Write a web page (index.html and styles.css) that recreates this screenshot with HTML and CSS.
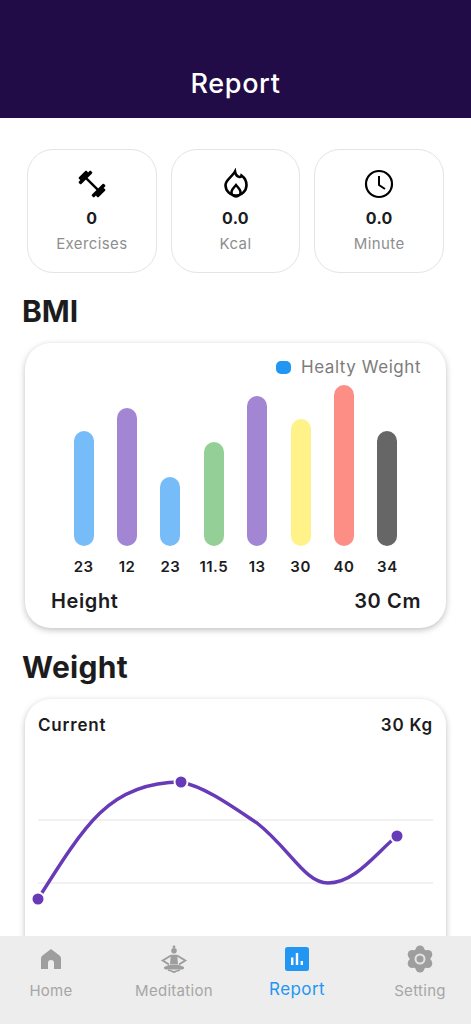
FILE: index.html
```html
<!DOCTYPE html>
<html lang="en">
<head>
  <meta charset="UTF-8">
  <meta name="viewport" content="width=device-width, initial-scale=1.0">
  <title>Report</title>
  <link rel="stylesheet" href="styles.css">
</head>
<body>
  <div class="screen">
    <header class="top-bar">Report</header>

    <main class="content">
      <!-- Summary -->
      <section class="stats">
        <div class="stat">
          <svg class="stat-icon" viewBox="0 0 32 32">
            <g transform="rotate(45 16 16)" fill="#000">
              <rect x="8" y="14.800" width="16" height="2.400"/>
              <rect x="5" y="7.500" width="3.500" height="17" rx="1"/>
              <rect x="23.500" y="7.500" width="3.500" height="17" rx="1"/>
              <rect x="2" y="10.500" width="3.500" height="11" rx="1"/>
              <rect x="26.500" y="10.500" width="3.500" height="11" rx="1"/>
            </g>
          </svg>
          <div class="stat-value">0</div>
          <div class="stat-label">Exercises</div>
        </div>
        <div class="stat">
          <svg class="stat-icon" viewBox="-4 -2 32 32" fill="none" stroke="#000">
            <path stroke-width="2.600" d="M11 1.500c.5 3 2 5 4.500 5.500 1 .2 1.800-.5 2-1.500C21 8 22.500 11.500 22.500 15a10.500 10.500 0 0 1-21 0C1.500 10 8 7 11 1.500z"/>
            <path stroke-width="2.400" d="M12 15c2 2.500 4.500 4.500 4.500 7a4.500 4.500 0 0 1-9 0c0-2.500 2.500-4.500 4.500-7z"/>
          </svg>
          <div class="stat-value">0.0</div>
          <div class="stat-label">Kcal</div>
        </div>
        <div class="stat">
          <svg class="stat-icon" viewBox="0 0 32 32" fill="none" stroke="#000" stroke-width="2.200">
            <circle cx="16" cy="16" r="13"/>
            <path d="M16 8v9l6 4" stroke-width="2"/>
          </svg>
          <div class="stat-value">0.0</div>
          <div class="stat-label">Minute</div>
        </div>
      </section>

      <h2 class="section-title">BMI</h2>
      <section class="card bmi-card">
        <div class="legend"><span class="legend-dot"></span>Healty Weight</div>
        <div class="bars">
          <div class="bar-col"><span class="bar bar-blue" style="height:115px"></span><span class="bar-label">23</span></div>
          <div class="bar-col"><span class="bar bar-purple" style="height:138px"></span><span class="bar-label">12</span></div>
          <div class="bar-col"><span class="bar bar-blue" style="height:69px"></span><span class="bar-label">23</span></div>
          <div class="bar-col"><span class="bar bar-green" style="height:104px"></span><span class="bar-label">11.5</span></div>
          <div class="bar-col"><span class="bar bar-purple" style="height:150px"></span><span class="bar-label">13</span></div>
          <div class="bar-col"><span class="bar bar-yellow" style="height:127px"></span><span class="bar-label">30</span></div>
          <div class="bar-col"><span class="bar bar-red" style="height:161px"></span><span class="bar-label">40</span></div>
          <div class="bar-col"><span class="bar bar-dark" style="height:115px"></span><span class="bar-label">34</span></div>
        </div>
        <div class="card-row"><span>Height</span><span>30 Cm</span></div>
      </section>

      <h2 class="section-title weight-title">Weight</h2>
      <section class="card weight-card">
        <div class="weight-row"><span>Current</span><span>30 Kg</span></div>
        <svg class="chart" viewBox="0 0 421 240">
          <line x1="13" y1="121" x2="408" y2="121" stroke="#ececec" stroke-width="1.500"/>
          <line x1="13" y1="184" x2="408" y2="184" stroke="#ececec" stroke-width="1.500"/>
          <path d="M13 200C35 165 55 133 75 114C98 92 125 83 156 83C180 88 205 106 232 124C265 150 280 184 303 184C330 184 350 155 372 137" fill="none" stroke="#673ab7" stroke-width="3.500"/>
          <circle cx="13" cy="200" r="6.500" fill="#673ab7" stroke="#fff" stroke-width="2"/>
          <circle cx="156" cy="83" r="6.500" fill="#673ab7" stroke="#fff" stroke-width="2"/>
          <circle cx="372" cy="137" r="6.500" fill="#673ab7" stroke="#fff" stroke-width="2"/>
        </svg>
      </section>
    </main>

    <!-- Bottom tabs -->
    <nav class="tabs">
      <div class="tab">
        <svg class="tab-icon" viewBox="0 0 28 28"><path fill="#9e9e9e" d="M14 4 5.500 10.500Q4 11.700 4 13.500V24h7v-6a3 3 0 0 1 6 0v6h7V13.500q0-1.800-1.500-3z"/></svg>
        <span>Home</span>
      </div>
      <div class="tab">
        <svg class="tab-icon" viewBox="0 0 28 28" fill="#9e9e9e">
          <circle cx="14" cy="1.800" r="1.400"/>
          <circle cx="14" cy="5.800" r="2.800"/>
          <path d="M10.800 9.800h6.400l.8 9.700h-8z"/>
          <path d="M11 10.500 2.800 15.500l6.200 4M17 10.500l8.200 5-6.200 4" fill="none" stroke="#9e9e9e" stroke-width="2"/>
          <path d="M9 20h10l5 2q.5 2-1.500 2.500h-17Q3.500 24 4 22z"/>
          <path d="M8 25l8 2.500M20 25l-8 2.500" fill="none" stroke="#9e9e9e" stroke-width="1.500"/>
        </svg>
        <span>Meditation</span>
      </div>
      <div class="tab tab-active">
        <svg class="tab-icon" viewBox="-2 -2 28 28">
          <rect width="24" height="24" rx="2.500" fill="#2196f3"/>
          <path fill="#fff" d="M6 10.500h2.400V18H6zM10.800 6h2.400v12h-2.400zM15.600 14H18v4h-2.400z"/>
        </svg>
        <span>Report</span>
      </div>
      <div class="tab">
        <svg class="tab-icon" viewBox="0 0 28 28" fill="#9e9e9e">
          <circle cx="14" cy="14" r="10.500"/>
          <circle cx="14" cy="5" r="4.500"/>
          <circle cx="14" cy="23" r="4.500"/>
          <circle cx="6.200" cy="9.500" r="4.500"/>
          <circle cx="21.800" cy="9.500" r="4.500"/>
          <circle cx="6.200" cy="18.500" r="4.500"/>
          <circle cx="21.800" cy="18.500" r="4.500"/>
          <circle cx="14" cy="14" r="4.500" fill="none" stroke="#e4e4e4" stroke-width="2"/>
        </svg>
        <span>Setting</span>
      </div>
    </nav>
  </div>
</body>
</html>
```

FILE: styles.css
```css
* {
  box-sizing: border-box;
}

body {
  margin: 0;
  background: #fff;
  font-family: 'Inter', 'Liberation Sans', sans-serif;
  color: #1c1c1e;
}

.screen {
  width: 471px;
  height: 1024px;
  display: flex;
  flex-direction: column;
  overflow: hidden;
}

.top-bar {
  height: 118px;
  flex-shrink: 0;
  background: #220c47;
  color: #fff;
  font-size: 27px;
  font-weight: 500;
  letter-spacing: 0.65px;
  text-align: center;
  padding-top: 68px;
  line-height: 32px;
}

.content {
  flex: 1;
  min-height: 0;
  overflow: hidden;
  padding: 31px 25px 0 22px;
}

/* Summary */
.stats {
  display: flex;
  gap: 14px;
  padding-left: 5px;
}

.stat {
  width: 129.7px;
  height: 124px;
  flex-shrink: 0;
  border: 1.5px solid #e4e4e4;
  border-radius: 26px;
  display: flex;
  flex-direction: column;
  align-items: center;
  padding-top: 18px;
}

.stat-icon {
  width: 32px;
  height: 32px;
}

.stat-value {
  font-size: 16px;
  font-weight: 700;
  margin-top: 8px;
  line-height: 20px;
  letter-spacing: 0.3px;
}

.stat-label {
  font-size: 15px;
  color: #8e8e8e;
  margin-top: 6px;
  line-height: 20px;
  letter-spacing: 0.4px;
}

.section-title {
  margin: 20px 0 14px;
  font-size: 30px;
  font-weight: 700;
  line-height: 36px;
}

.weight-title {
  margin: 21px 0 14px;
  letter-spacing: 0.3px;
}

/* Cards */
.card {
  background: #fff;
  border-radius: 26px;
  margin-left: 3px;
  width: 421px;
  box-shadow: 0 2px 6px rgba(0, 0, 0, 0.25);
}

.bmi-card {
  height: 285px;
  padding: 13px 25px 0 26px;
}

.legend {
  display: flex;
  align-items: center;
  justify-content: flex-end;
  font-size: 17px;
  color: #7c7c7c;
  line-height: 22px;
  letter-spacing: 0.55px;
}

.legend-dot {
  width: 15px;
  height: 13px;
  border-radius: 5px;
  background: #2196f3;
  margin-right: 10px;
}

.bars {
  display: flex;
  justify-content: center;
  margin-top: 7px;
  padding-right: 1px;
}

.bar-col {
  width: 43.4px;
  height: 191px;
  display: flex;
  flex-direction: column;
  align-items: center;
  justify-content: flex-end;
}

.bar {
  display: block;
  width: 20px;
  border-radius: 10px;
}

.bar-label {
  font-size: 15px;
  font-weight: 600;
  line-height: 18px;
  margin-top: 12px;
  letter-spacing: 0.5px;
}

.bar-blue { background: #75bcf9; }
.bar-purple { background: #a286d3; }
.bar-green { background: #95cf98; }
.bar-yellow { background: #fff289; }
.bar-red { background: #fc8e85; }
.bar-dark { background: #666; }

.card-row {
  display: flex;
  justify-content: space-between;
  font-size: 20px;
  font-weight: 600;
  line-height: 24px;
  margin-top: 13px;
  letter-spacing: 0.6px;
}

.weight-card {
  height: 300px;
  position: relative;
  padding: 15px 13px 0;
}

.weight-row {
  display: flex;
  justify-content: space-between;
  font-size: 17px;
  font-weight: 600;
  line-height: 22px;
  letter-spacing: 0.8px;
}

.chart {
  position: absolute;
  left: 0;
  top: 0;
  width: 421px;
  height: 240px;
  overflow: visible;
}

/* Bottom tabs */
.tabs {
  height: 88px;
  flex-shrink: 0;
  background: #ededed;
  display: flex;
  justify-content: center;
}

.tab {
  flex: 0 0 123px;
  display: flex;
  flex-direction: column;
  align-items: center;
  color: #a6a6a6;
  font-size: 15px;
  line-height: 20px;
  letter-spacing: 0.3px;
  padding-top: 9px;
}

.tab-icon {
  width: 28px;
  height: 28px;
  margin-bottom: 8px;
}

.tab-active {
  color: #2196f3;
  font-size: 17px;
  letter-spacing: 0.4px;
}

.tab-active span {
  margin-top: -2px;
}
```
